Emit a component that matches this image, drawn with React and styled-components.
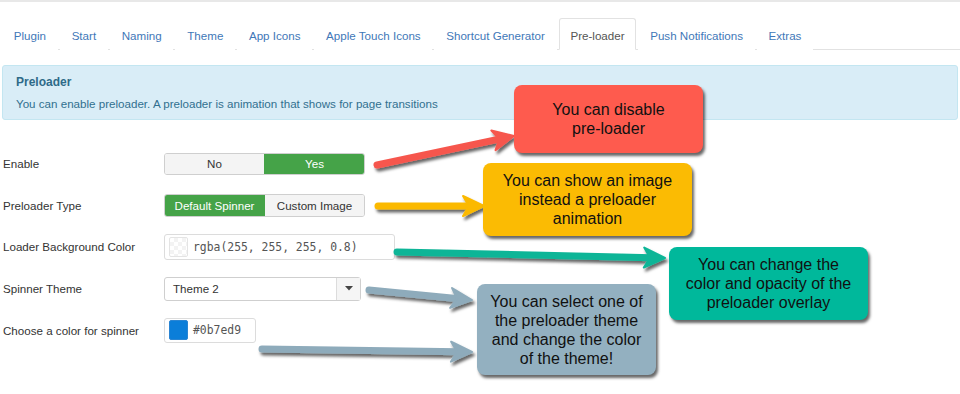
import React from "react";
import styled, { createGlobalStyle } from "styled-components";

const tabs = [
  "Plugin",
  "Start",
  "Naming",
  "Theme",
  "App Icons",
  "Apple Touch Icons",
  "Shortcut Generator",
  "Pre-loader",
  "Push Notifications",
  "Extras",
];

const callouts = [
  { text: ["You can disable", "pre-loader"], color: "#fe5b4e", x: 514, y: 83, w: 189, h: 68 },
  { text: ["You can show an image", "instead a preloader", "animation"], color: "#fbbb03", x: 483, y: 161, w: 209, h: 73 },
  { text: ["You can change the", "color and opacity of the", "preloader overlay"], color: "#00b89b", x: 669, y: 245, w: 199, h: 73 },
  { text: ["You can select one of", "the preloader theme", "and change the color", "of the theme!"], color: "#93b0c0", x: 477, y: 282, w: 179, h: 91 },
];

const arrows = [
  { x1: 377, y1: 165, x2: 514, y2: 136, color: "#f6574e" },
  { x1: 378, y1: 206, x2: 484, y2: 206, color: "#fbb902" },
  { x1: 397, y1: 252, x2: 665, y2: 258, color: "#10b597" },
  { x1: 369, y1: 290, x2: 472, y2: 300, color: "#8eabbb" },
  { x1: 262, y1: 349, x2: 472, y2: 352, color: "#8eabbb" },
];

const Arrow = ({ x1, y1, x2, y2, color }) => {
  const len = Math.hypot(x2 - x1, y2 - y1);
  const ux = (x2 - x1) / len;
  const uy = (y2 - y1) / len;
  const nx = -uy;
  const ny = ux;
  const back = 21;
  const notch = 15;
  const half = 10;
  const bx = x2 - ux * back;
  const by = y2 - uy * back;
  const mx = x2 - ux * notch;
  const my = y2 - uy * notch;
  const head = [
    [x2, y2],
    [bx + nx * half, by + ny * half],
    [mx, my],
    [bx - nx * half, by - ny * half],
  ]
    .map((p) => p.join(","))
    .join(" ");
  return (
    <g filter="url(#shadow)">
      <line
        x1={x1}
        y1={y1}
        x2={mx + ux * 2}
        y2={my + uy * 2}
        stroke={color}
        strokeWidth="7"
        strokeLinecap="round"
      />
      <polygon points={head} fill={color} strokeLinejoin="round" stroke={color} strokeWidth="2" />
    </g>
  );
};

const App = () => {
  return (
    <Page>
      <GlobalStyle />
      <TabBar>
        {tabs.map((t) => (
          <Tab key={t} $active={t === "Pre-loader"}>
            {t}
          </Tab>
        ))}
      </TabBar>

      <Alert>
        <AlertTitle>Preloader</AlertTitle>
        <AlertText>
          You can enable preloader. A preloader is animation that shows for page
          transitions
        </AlertText>
      </Alert>

      <Form>
        <Row>
          <Label>Enable</Label>
          <BtnGroup>
            <ToggleBtn>No</ToggleBtn>
            <ToggleBtn $on>Yes</ToggleBtn>
          </BtnGroup>
        </Row>
        <Row>
          <Label>Preloader Type</Label>
          <BtnGroup $tall>
            <ToggleBtn $on>Default Spinner</ToggleBtn>
            <ToggleBtn>Custom Image</ToggleBtn>
          </BtnGroup>
        </Row>
        <Row>
          <Label>Loader Background Color</Label>
          <ColorInput $width={231} $height={26}>
            <Swatch $checker />
            <ColorValue>rgba(255, 255, 255, 0.8)</ColorValue>
          </ColorInput>
        </Row>
        <Row>
          <Label>Spinner Theme</Label>
          <Select>
            <SelectValue>Theme 2</SelectValue>
            <Caret>
              <svg width="8" height="5" viewBox="0 0 8 5">
                <path d="M0 0 L8 0 L4 4.5 Z" fill="#444" />
              </svg>
            </Caret>
          </Select>
        </Row>
        <Row>
          <Label>Choose a color for spinner</Label>
          <ColorInput $width={92} $height={25}>
            <Swatch $color="#0b7ed9" />
            <ColorValue>#0b7ed9</ColorValue>
          </ColorInput>
        </Row>
      </Form>

      <Overlay viewBox="0 0 960 394" width="960" height="394">
        <defs>
          <filter id="shadow" x="-10%" y="-50%" width="120%" height="200%">
            <feDropShadow dx="2" dy="3" stdDeviation="1.4" floodColor="#000" floodOpacity="0.6" />
          </filter>
        </defs>
        {arrows.map((a, i) => (
          <Arrow key={i} {...a} />
        ))}
      </Overlay>

      {callouts.map((c, i) => (
        <Callout
          key={i}
          $bg={c.color}
          style={{ left: c.x, top: c.y, width: c.w, height: c.h }}
        >
          {c.text.map((line) => (
            <span key={line}>{line}</span>
          ))}
        </Callout>
      ))}
    </Page>
  );
};

const GlobalStyle = createGlobalStyle`
  body {
    margin: 0;
    background: #fff;
    font-family: "Liberation Sans", Arial, sans-serif;
  }
`;

const Page = styled.div`
  position: relative;
  width: 960px;
  height: 394px;
  overflow: hidden;
  border-top: 2px solid #e8e8e8;
  box-sizing: border-box;
  font-size: 11.6px;
  color: #333;
`;

const TabBar = styled.div`
  display: flex;
  margin: 16px 0 0 2px;
  border-bottom: 1px solid #e2e2e2;
`;

const Tab = styled.div`
  height: 32px;
  box-sizing: border-box;
  display: flex;
  align-items: center;
  padding: 2px 10.8px 0;
  margin-right: 2px;
  margin-bottom: -1px;
  border: 1px solid transparent;
  border-radius: 3px 3px 0 0;
  color: ${(p) => (p.$active ? "#555" : "#3f78b8")};
  background: #fff;
  ${(p) => p.$active && "border-color: #e2e2e2 #e2e2e2 transparent;"}
`;

const Alert = styled.div`
  margin: 15px 2px 0;
  padding: 8px 13px 7px;
  background: #d9edf7;
  border: 1px solid #c3e6f1;
  border-radius: 3px;
  color: #31708f;
`;

const AlertTitle = styled.div`
  font-weight: bold;
  font-size: 12px;
  line-height: 17px;
  color: #2e6a88;
`;

const AlertText = styled.div`
  margin-top: 4px;
  line-height: 17px;
`;

const Form = styled.div`
  margin-top: 23px;
  padding-left: 3px;
`;

const Row = styled.div`
  display: flex;
  align-items: center;
  height: 41.6px;
`;

const Label = styled.div`
  width: 161px;
  flex-shrink: 0;
  color: #333;
`;

const BtnGroup = styled.div`
  display: flex;
  width: 201px;
  height: ${(p) => (p.$tall ? 23 : 22)}px;
  border: 1px solid #cfcfcf;
  border-radius: 3px;
  overflow: hidden;
  box-sizing: border-box;
`;

const ToggleBtn = styled.div`
  flex: 1;
  display: flex;
  align-items: center;
  justify-content: center;
  background: ${(p) => (p.$on ? "#45a348" : "#f4f4f4")};
  color: ${(p) => (p.$on ? "#fff" : "#333")};
  & + & {
    border-left: 1px solid ${(p) => (p.$on ? "#45a348" : "#d6d6d6")};
  }
`;

const ColorInput = styled.div`
  display: flex;
  align-items: center;
  gap: 5px;
  width: ${(p) => p.$width}px;
  height: ${(p) => p.$height}px;
  box-sizing: border-box;
  padding-left: 4px;
  border: 1px solid #dcdcdc;
  border-radius: 3px;
  background: #fff;
`;

const Swatch = styled.div`
  width: 17px;
  height: 18px;
  border-radius: 2px;
  border: 1px solid #e4e4e4;
  background: ${(p) =>
    p.$checker
      ? "repeating-conic-gradient(#f3f3f3 0% 25%, #fff 0% 50%) 0 0 / 8px 8px"
      : p.$color};
  ${(p) => !p.$checker && "border-color: #2a85d3;"}
`;

const ColorValue = styled.span`
  font-family: "DejaVu Sans Mono", "Liberation Mono", monospace;
  font-size: 11.4px;
  color: #555;
`;

const Select = styled.div`
  display: flex;
  width: 197px;
  height: 24px;
  box-sizing: border-box;
  border: 1px solid #cfcfcf;
  border-radius: 3px;
  background: #fff;
`;

const SelectValue = styled.div`
  flex: 1;
  display: flex;
  align-items: center;
  padding-left: 8px;
  color: #333;
`;

const Caret = styled.div`
  width: 23px;
  display: flex;
  align-items: center;
  justify-content: center;
  border-left: 1px solid #dcdcdc;
  background: #f5f5f5;
`;

const Overlay = styled.svg`
  position: absolute;
  left: 0;
  top: -2px;
  pointer-events: none;
`;

const Callout = styled.div`
  position: absolute;
  box-sizing: border-box;
  display: flex;
  flex-direction: column;
  align-items: center;
  justify-content: center;
  background: ${(p) => p.$bg};
  border-radius: 8px;
  box-shadow: 2px 3px 3px rgba(0, 0, 0, 0.6);
  font-size: 16px;
  line-height: 19px;
  color: #111;
  text-align: center;
`;

export default App;
